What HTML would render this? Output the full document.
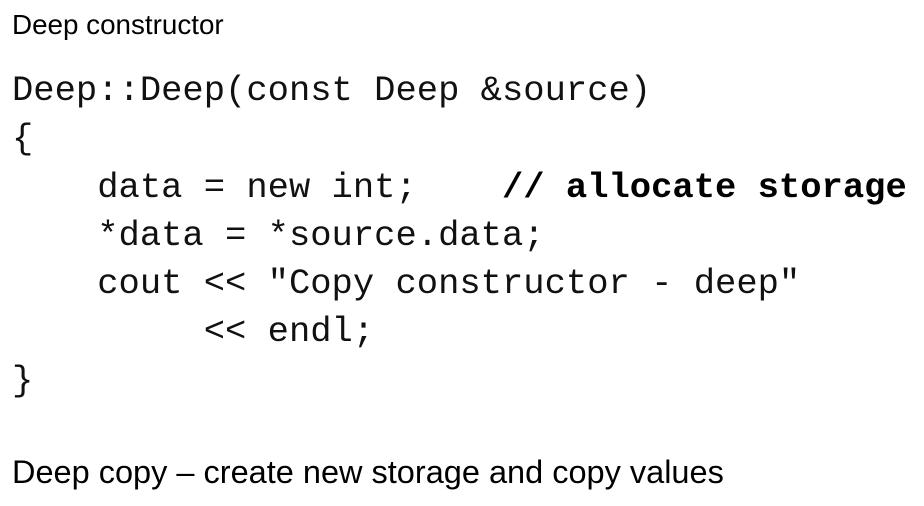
<!DOCTYPE html>
<html><head><style>
body{margin:0;width:924px;height:506px;background:#fff;overflow:hidden;position:relative;color:#000}
.t{position:absolute;left:12px;font-family:"Liberation Sans",sans-serif;white-space:nowrap}
pre{position:absolute;left:12px;top:67px;margin:0;font-family:"Liberation Mono",monospace;font-size:35.5px;line-height:48.3px;color:#111}
b{font-weight:bold;color:#000}
</style></head><body>
<div class="t" style="top:9px;font-size:27.8px">Deep constructor</div>
<pre>Deep::Deep(const Deep &amp;source)
{
    data = new int;    <b>// allocate storage</b>
    *data = *source.data;
    cout &lt;&lt; "Copy constructor - deep"
         &lt;&lt; endl;
}</pre>
<div class="t" style="top:454px;font-size:32.5px">Deep copy – create new storage and copy values</div>
</body></html>
